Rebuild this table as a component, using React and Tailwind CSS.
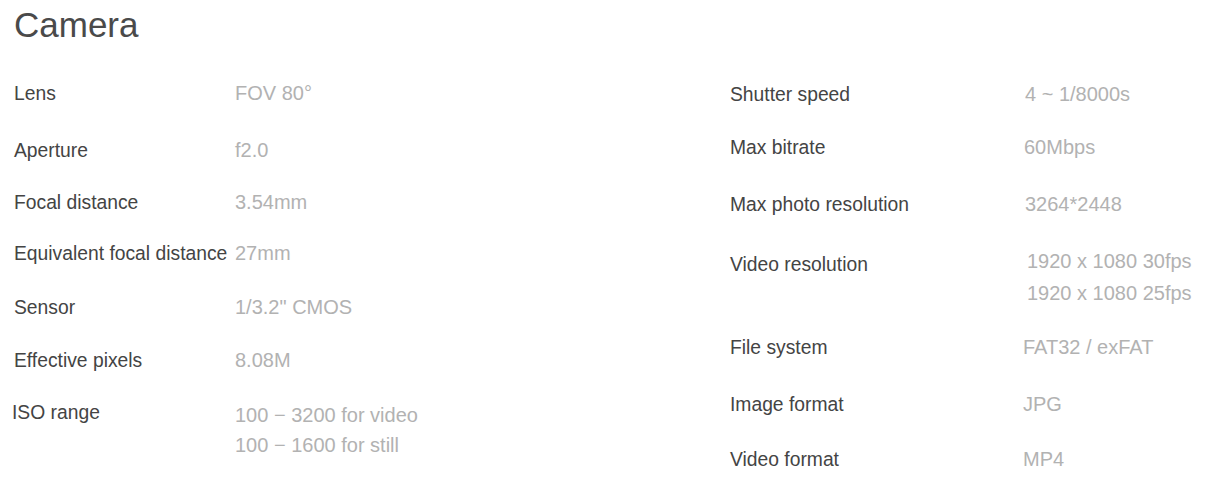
import React from "react";

// camera spec sheet, two columns of label / value rows
const leftRows = [
  { label: "Lens", value: ["FOV 80°"], row: "h-[57px]" },
  { label: "Aperture", value: ["f2.0"], row: "h-[52px]" },
  { label: "Focal distance", value: ["3.54mm"], row: "h-[51px]" },
  { label: "Equivalent focal distance", value: ["27mm"], row: "h-[54px]" },
  { label: "Sensor", value: ['1/3.2" CMOS'], row: "h-[53px]" },
  { label: "Effective pixels", value: ["8.08M"], row: "h-[52px]" },
  {
    label: "ISO range",
    labelCls: "-ml-[2px] mr-[2px]",
    value: ["100 − 3200 for video", "100 − 1600 for still"],
    valueCls: "leading-[30px] -mt-[3px]",
    row: "h-[60px]",
  },
];

const rightRows = [
  { label: "Shutter speed", value: ["4 ~ 1/8000s"], valueCls: "pl-[2px]", row: "h-[53px]" },
  { label: "Max bitrate", value: ["60Mbps"], valueCls: "pl-[1px]", row: "h-[57px]" },
  { label: "Max photo resolution", value: ["3264*2448"], valueCls: "pl-[2px]", row: "h-[60px]" },
  {
    label: "Video resolution",
    value: ["1920 x 1080 30fps", "1920 x 1080 25fps"],
    valueCls: "pl-[4px] leading-[32px] -mt-[10px]",
    row: "h-[83px]",
  },
  { label: "File system", value: ["FAT32 / exFAT"], row: "h-[57px]" },
  { label: "Image format", value: ["JPG"], row: "h-[55px]" },
  { label: "Video format", value: ["MP4"], row: "h-[40px]" },
];

const SpecRow = ({ item, labelWidth }) => (
  <div className={`flex items-start ${item.row}`}>
    <div className={`${labelWidth} shrink-0 text-[19.3px] leading-[19px] text-[#444444] ${item.labelCls || ""}`}>
      {item.label}
    </div>
    <div className={`text-[20px] leading-[19px] text-[#b2b2b2] ${item.valueCls || ""}`}>
      {item.value.map((v) => (
        <div key={v}>{v}</div>
      ))}
    </div>
  </div>
);

export default function App() {
  return (
    <div
      className="w-[1214px] h-[495px] bg-white pl-[14px] pt-[7px] overflow-hidden"
      style={{ fontFamily: '"Liberation Sans", Arial, sans-serif' }}
    >
      <h1 className="text-[35px] leading-[35px] text-[#4a4a4a] font-normal">Camera</h1>

      <div className="flex mt-[42px]">
        {/* left column */}
        <div className="w-[716px] flex flex-col">
          {leftRows.map((r) => (
            <SpecRow key={r.label} item={r} labelWidth="w-[221px]" />
          ))}
        </div>

        {/* right column */}
        <div className="flex flex-col pt-[1px]">
          {rightRows.map((r) => (
            <SpecRow key={r.label} item={r} labelWidth="w-[293px]" />
          ))}
        </div>
      </div>
    </div>
  );
}
